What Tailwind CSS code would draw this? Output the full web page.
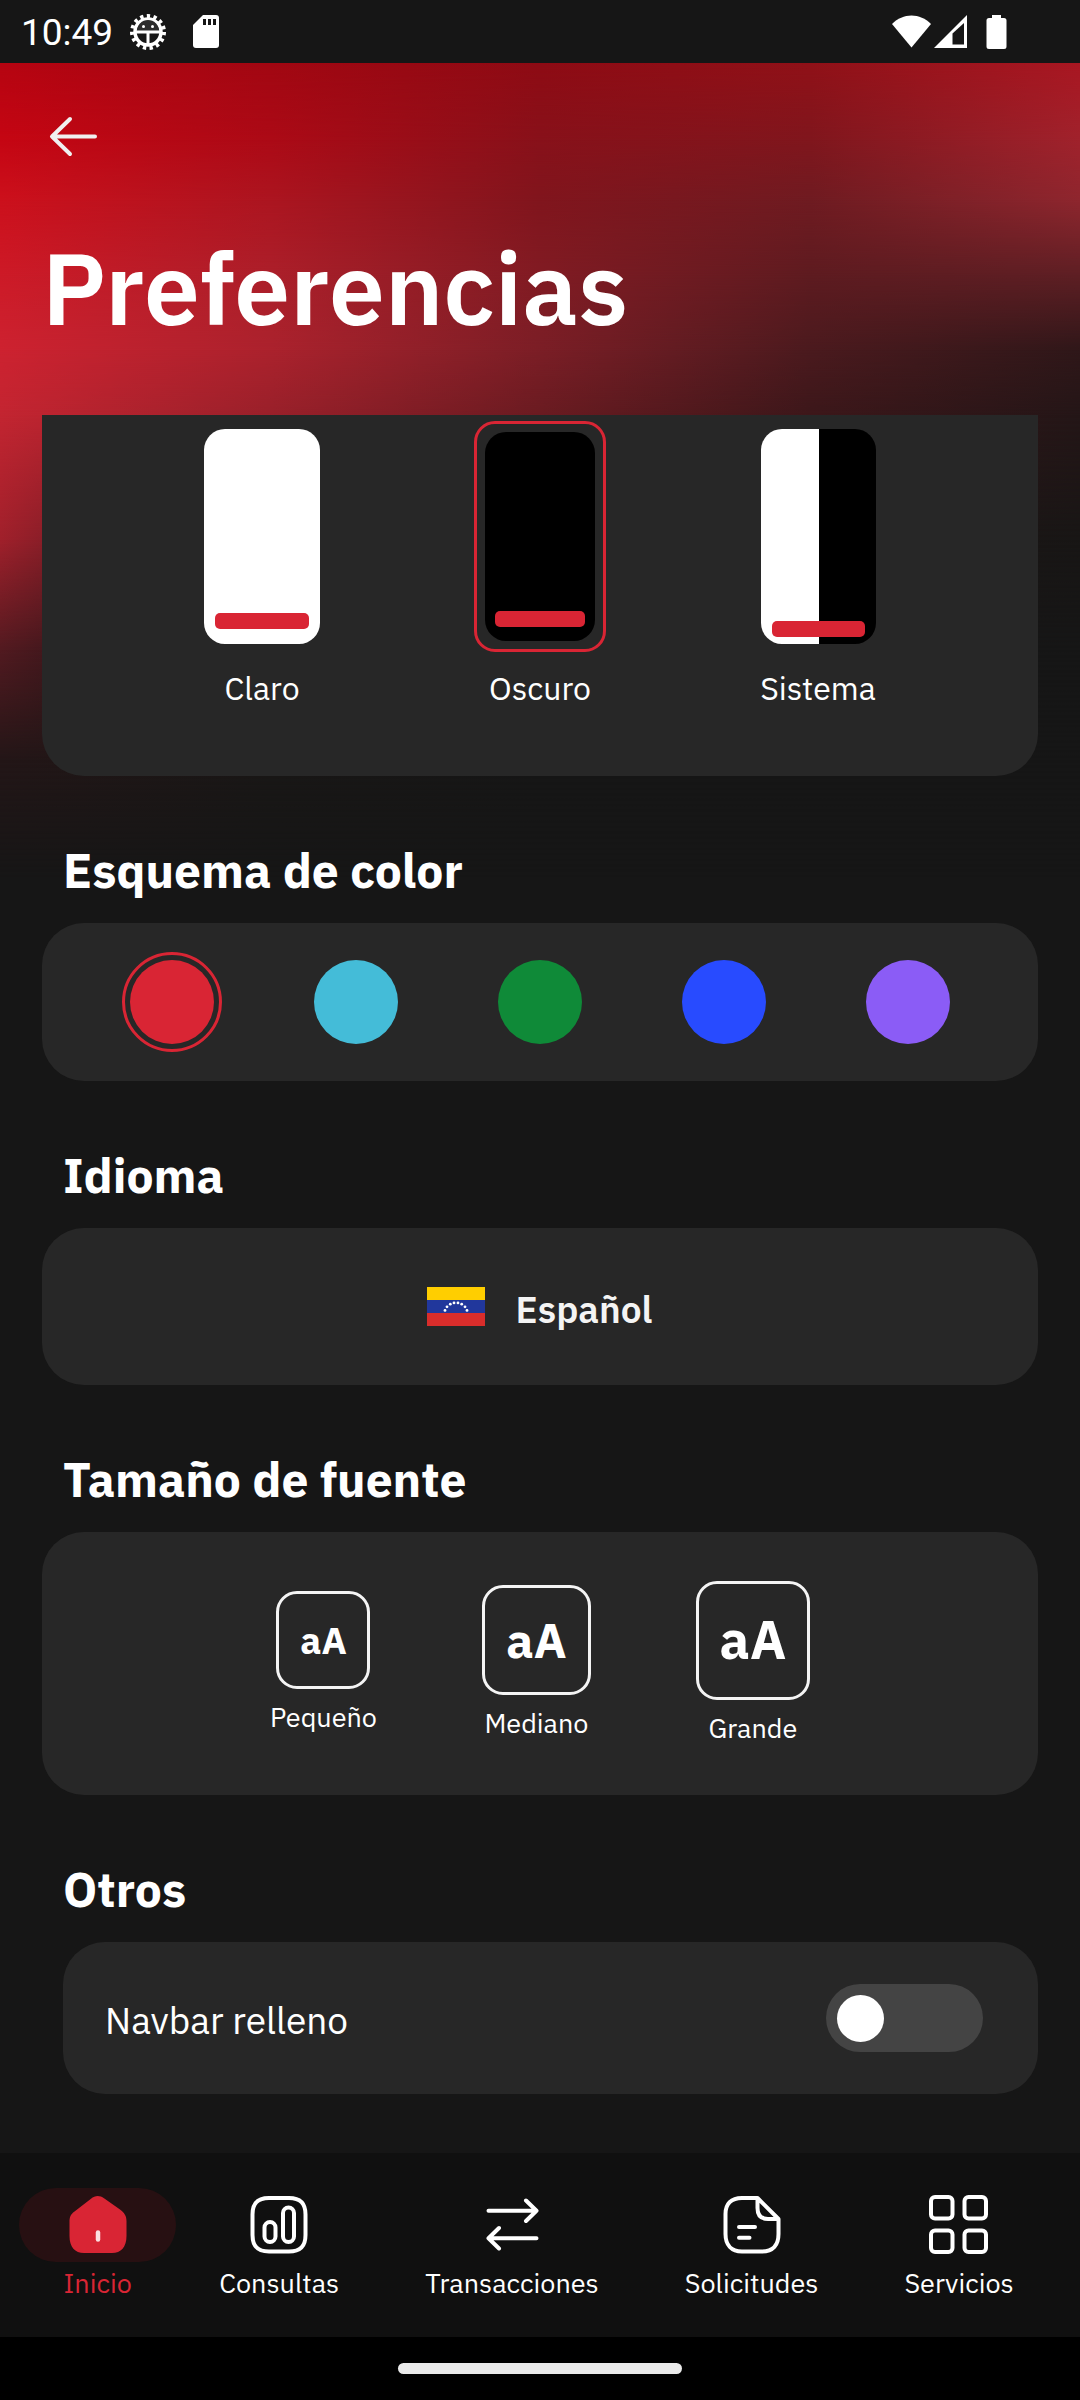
<!DOCTYPE html>
<html lang="es">
<head>
<meta charset="utf-8">
<meta name="viewport" content="width=device-width, initial-scale=1">
<title>Preferencias</title>
<script src="https://cdn.jsdelivr.net/npm/@tailwindcss/browser@4"></script>
</head>
<body class="bg-[#161616] text-white font-['IBM_Plex_Sans',Roboto,sans-serif]">
<div class="relative isolate flex min-h-screen flex-col">

  <!-- Backdrop: each row is a horizontal gradient that fades in over the row above -->
  <svg class="absolute inset-x-0 top-0 -z-10 h-[880px] w-full" viewBox="0 0 1080 880" preserveAspectRatio="none" aria-hidden="true">
    <defs>
      <linearGradient id="r1"><stop offset="0" stop-color="#b60411"/><stop offset=".25" stop-color="#a20712"/><stop offset=".5" stop-color="#8e0b14"/><stop offset=".75" stop-color="#901118"/><stop offset="1" stop-color="#a91722"/></linearGradient>
      <linearGradient id="r2"><stop offset="0" stop-color="#c50613"/><stop offset=".25" stop-color="#ac0a16"/><stop offset=".5" stop-color="#88111a"/><stop offset=".75" stop-color="#80161d"/><stop offset="1" stop-color="#a0222c"/></linearGradient>
      <linearGradient id="r3"><stop offset="0" stop-color="#cc101c"/><stop offset=".25" stop-color="#ac1520"/><stop offset=".5" stop-color="#81151d"/><stop offset=".75" stop-color="#6f1b21"/><stop offset="1" stop-color="#8e262e"/></linearGradient>
      <linearGradient id="r4"><stop offset="0" stop-color="#cd1a27"/><stop offset=".25" stop-color="#ac1f2a"/><stop offset=".5" stop-color="#811b23"/><stop offset=".75" stop-color="#5e1b20"/><stop offset="1" stop-color="#5e1f24"/></linearGradient>
      <linearGradient id="r5"><stop offset="0" stop-color="#cd2230"/><stop offset=".25" stop-color="#ab222d"/><stop offset=".5" stop-color="#7b1e26"/><stop offset=".75" stop-color="#4b1a1e"/><stop offset="1" stop-color="#2f1719"/></linearGradient>
      <linearGradient id="r6"><stop offset="0" stop-color="#c32531"/><stop offset=".25" stop-color="#99202a"/><stop offset=".5" stop-color="#6a1b21"/><stop offset=".75" stop-color="#3c171a"/><stop offset="1" stop-color="#241617"/></linearGradient>
      <linearGradient id="r7"><stop offset="0" stop-color="#a0202b"/><stop offset=".04" stop-color="#8a1e28"/><stop offset=".5" stop-color="#28171a"/><stop offset="1" stop-color="#181615"/></linearGradient>
      <linearGradient id="r8"><stop offset="0" stop-color="#521a20"/><stop offset=".04" stop-color="#44181d"/><stop offset=".5" stop-color="#181616"/><stop offset="1" stop-color="#161616"/></linearGradient>
      <linearGradient id="r9"><stop offset="0" stop-color="#231617"/><stop offset=".25" stop-color="#191716"/><stop offset=".5" stop-color="#161616"/><stop offset="1" stop-color="#161616"/></linearGradient>
      <linearGradient id="fade" x2="0" y2="1"><stop offset="0" stop-color="#fff" stop-opacity="0"/><stop offset="1" stop-color="#fff"/></linearGradient>
      <mask id="m2" maskUnits="userSpaceOnUse" x="0" y="0" width="1080" height="880"><rect y="63" width="1080" height="77" fill="url(#fade)"/><rect y="140" width="1080" height="740" fill="#fff"/></mask>
      <mask id="m3" maskUnits="userSpaceOnUse" x="0" y="0" width="1080" height="880"><rect y="140" width="1080" height="60" fill="url(#fade)"/><rect y="200" width="1080" height="680" fill="#fff"/></mask>
      <mask id="m4" maskUnits="userSpaceOnUse" x="0" y="0" width="1080" height="880"><rect y="200" width="1080" height="75" fill="url(#fade)"/><rect y="275" width="1080" height="605" fill="#fff"/></mask>
      <mask id="m5" maskUnits="userSpaceOnUse" x="0" y="0" width="1080" height="880"><rect y="275" width="1080" height="75" fill="url(#fade)"/><rect y="350" width="1080" height="530" fill="#fff"/></mask>
      <mask id="m6" maskUnits="userSpaceOnUse" x="0" y="0" width="1080" height="880"><rect y="350" width="1080" height="65" fill="url(#fade)"/><rect y="415" width="1080" height="465" fill="#fff"/></mask>
      <mask id="m7" maskUnits="userSpaceOnUse" x="0" y="0" width="1080" height="880"><rect y="415" width="1080" height="125" fill="url(#fade)"/><rect y="540" width="1080" height="340" fill="#fff"/></mask>
      <mask id="m8" maskUnits="userSpaceOnUse" x="0" y="0" width="1080" height="880"><rect y="540" width="1080" height="110" fill="url(#fade)"/><rect y="650" width="1080" height="230" fill="#fff"/></mask>
      <mask id="m9" maskUnits="userSpaceOnUse" x="0" y="0" width="1080" height="880"><rect y="650" width="1080" height="110" fill="url(#fade)"/><rect y="760" width="1080" height="120" fill="#fff"/></mask>
      <mask id="m10" maskUnits="userSpaceOnUse" x="0" y="0" width="1080" height="880"><rect y="760" width="1080" height="120" fill="url(#fade)"/></mask>
    </defs>
    <rect width="1080" height="880" fill="url(#r1)"/>
    <rect width="1080" height="880" fill="url(#r2)" mask="url(#m2)"/>
    <rect width="1080" height="880" fill="url(#r3)" mask="url(#m3)"/>
    <rect width="1080" height="880" fill="url(#r4)" mask="url(#m4)"/>
    <rect width="1080" height="880" fill="url(#r5)" mask="url(#m5)"/>
    <rect width="1080" height="880" fill="url(#r6)" mask="url(#m6)"/>
    <rect width="1080" height="880" fill="url(#r7)" mask="url(#m7)"/>
    <rect width="1080" height="880" fill="url(#r8)" mask="url(#m8)"/>
    <rect width="1080" height="880" fill="url(#r9)" mask="url(#m9)"/>
    <rect width="1080" height="880" fill="#161616" mask="url(#m10)"/>
  </svg>

  <!-- Status bar -->
  <div class="flex h-[63px] items-center bg-[#161616] pl-[21px] pr-[73px] font-[Roboto,sans-serif]">
    <span class="pt-0.5 text-[37px] leading-[44px]">10:49</span>
    <svg class="ml-[15px] size-10" viewBox="0 0 40 40" aria-hidden="true">
      <circle cx="20" cy="20" r="16" fill="none" stroke="#fff" stroke-width="4" stroke-dasharray="3.300 3.402"/>
      <circle cx="20" cy="20" r="13" fill="none" stroke="#fff" stroke-width="3.500"/>
      <path d="M9 19a11 11 0 0 1 22 0z" fill="#2c2c2c"/>
      <path d="M8 20h24M20 20v13" stroke="#fff" stroke-width="3"/>
      <circle cx="15.500" cy="14.500" r="1.500" fill="#fff"/><circle cx="24.500" cy="14.500" r="1.500" fill="#fff"/>
    </svg>
    <svg class="ml-[25px] h-[34px] w-[26px]" viewBox="0 0 26 34" aria-hidden="true">
      <path d="M10 0h13a3 3 0 0 1 3 3v27a3 3 0 0 1-3 3H3a3 3 0 0 1-3-3V10z" fill="#fff"/>
      <path d="M10 4h3v6h-3zM15 4h3v6h-3zM20 4h3v6h-3z" fill="#161616"/>
    </svg>
    <svg class="ml-auto h-[34px] w-[116px]" viewBox="0 0 116 34" aria-hidden="true">
      <path d="M1 9C12-2.500 29-2.500 40 9L20.500 32.500z" fill="#fff"/>
      <path d="M43 33L76 0v33z" fill="#fff"/><path d="M61.500 18.500L73 8v21.500H61.500z" fill="#161616"/>
      <path d="M101 0h9v3h3a2.500 2.500 0 0 1 2.500 2.500v26a2.500 2.500 0 0 1-2.500 2.500H98a2.500 2.500 0 0 1-2.500-2.500v-26A2.500 2.500 0 0 1 98 3h3z" fill="#fff"/>
    </svg>
  </div>

  <header class="px-[42px] pt-[42px] pb-[62px]">
    <button type="button" aria-label="Volver" class="flex size-16 items-center justify-center">
      <svg class="size-16" viewBox="0 0 64 64" fill="none" stroke="#f0f0f0" stroke-width="4" stroke-linecap="round" stroke-linejoin="round" aria-hidden="true"><path d="M28 14L10 31.500 28 49M11 31.500H53"/></svg>
    </button>
    <h1 class="mt-[54px] text-[100px] leading-[130px] font-semibold">Preferencias</h1>
  </header>

  <main class="flex-1 px-[42px] pb-[59px]">
    <fieldset class="grid grid-cols-3 rounded-b-[42px] bg-[#272727] px-[81px] pt-[6px] pb-[67px]">
      <legend class="sr-only">Tema</legend>
      <label class="flex flex-col items-center">
        <input type="radio" name="tema" class="sr-only">
        <span class="flex h-[231px] items-center">
          <span class="flex h-[215px] w-[116px] flex-col justify-end rounded-[21px] bg-white px-[11px] pb-[15px]"><span class="h-4 rounded-[5px] bg-[#d92534]"></span></span>
        </span>
        <span class="mt-[15px] text-[32px] leading-[42px]">Claro</span>
      </label>
      <label class="flex flex-col items-center">
        <input type="radio" name="tema" class="sr-only" checked>
        <span class="flex h-[231px] w-[132px] rounded-[21px] border-[3px] border-[#d92534] p-2">
          <span class="flex w-full flex-col justify-end rounded-[21px] bg-black px-[10px] pb-[14px]"><span class="h-4 rounded-[5px] bg-[#d92534]"></span></span>
        </span>
        <span class="mt-[15px] text-[32px] leading-[42px]">Oscuro</span>
      </label>
      <label class="flex flex-col items-center">
        <input type="radio" name="tema" class="sr-only">
        <span class="flex h-[231px] items-center">
          <span class="flex h-[215px] w-[115px] flex-col justify-end rounded-[21px] bg-linear-to-r from-white from-50% to-black to-50% px-[11px] pb-[7px]"><span class="h-4 rounded-[5px] bg-[#d92534]"></span></span>
        </span>
        <span class="mt-[15px] text-[32px] leading-[42px]">Sistema</span>
      </label>
    </fieldset>

    <h2 class="px-[21px] pt-[62px] pb-[21px] text-[48px] leading-[64px] font-bold">Esquema de color</h2>
    <div role="radiogroup" aria-label="Esquema de color" class="grid h-[158px] grid-cols-5 items-center justify-items-center rounded-[42px] bg-[#272727] px-[38px]">
      <input type="radio" name="color" aria-label="Rojo" checked class="size-[84px] appearance-none rounded-full bg-[#d92534] outline-[3px] outline-offset-[5px] outline-[#d92534]">
      <input type="radio" name="color" aria-label="Celeste" class="size-[84px] appearance-none rounded-full bg-[#44bcd8]">
      <input type="radio" name="color" aria-label="Verde" class="size-[84px] appearance-none rounded-full bg-[#0f8a38]">
      <input type="radio" name="color" aria-label="Azul" class="size-[84px] appearance-none rounded-full bg-[#284bff]">
      <input type="radio" name="color" aria-label="Morado" class="size-[84px] appearance-none rounded-full bg-[#8b5cf6]">
    </div>

    <h2 class="px-[21px] pt-[62px] pb-[21px] text-[48px] leading-[64px] font-bold">Idioma</h2>
    <button type="button" class="flex h-[157px] w-full items-center justify-center gap-[30px] rounded-[42px] bg-[#272727] text-[#f4f4f4]">
      <svg class="h-[39px] w-[58px]" viewBox="0 0 58 40" preserveAspectRatio="none" aria-hidden="true">
        <path d="M0 0h58v14H0z" fill="#ffce00"/><path d="M0 13.300h58v14H0z" fill="#21379c"/><path d="M0 26.600h58V40H0z" fill="#d92d2b"/>
        <g fill="#fff"><circle cx="18" cy="24" r="1.400"/><circle cx="20" cy="20.300" r="1.400"/><circle cx="23.300" cy="17.600" r="1.400"/><circle cx="27" cy="16.300" r="1.400"/><circle cx="31" cy="16.300" r="1.400"/><circle cx="34.700" cy="17.600" r="1.400"/><circle cx="38" cy="20.300" r="1.400"/><circle cx="40" cy="24" r="1.400"/></g>
      </svg>
      <span class="pt-1 text-[37px] leading-[48px] font-semibold">Español</span>
    </button>

    <h2 class="px-[21px] pt-[62px] pb-[21px] text-[48px] leading-[64px] font-bold">Tamaño de fuente</h2>
    <div class="flex h-[263px] items-center justify-center gap-[105px] rounded-[42px] bg-[#272727] pb-0.5">
      <button type="button" class="flex flex-col items-center">
        <span class="flex h-[98px] w-[94px] items-center justify-center rounded-[21px] border-[3px] border-[#f4f4f4] text-[37px] leading-[48px] font-bold">aA</span>
        <span class="mt-[10px] text-[27px] leading-[35px]">Pequeño</span>
      </button>
      <button type="button" class="flex flex-col items-center">
        <span class="flex h-[110px] w-[109px] items-center justify-center rounded-[21px] border-[3px] border-[#f4f4f4] text-[48px] leading-[64px] font-bold">aA</span>
        <span class="mt-[10px] text-[27px] leading-[35px]">Mediano</span>
      </button>
      <button type="button" class="flex flex-col items-center">
        <span class="flex h-[119px] w-[114px] items-center justify-center rounded-[21px] border-[3px] border-[#f4f4f4] text-[53px] leading-[70px] font-bold">aA</span>
        <span class="mt-[10px] text-[27px] leading-[35px]">Grande</span>
      </button>
    </div>

    <h2 class="px-[21px] pt-[62px] pb-[21px] text-[48px] leading-[64px] font-bold">Otros</h2>
    <div class="ml-[21px] flex h-[152px] items-center justify-between rounded-[42px] bg-[#272727] pr-[55px] pl-[42px]">
      <label for="navbar" class="pt-1 text-[37px] leading-[48px]">Navbar relleno</label>
      <input id="navbar" type="checkbox" role="switch" class="flex h-[68px] w-[157px] appearance-none items-center rounded-full bg-[#444] px-[11px] before:size-[47px] before:rounded-full before:bg-white before:content-[''] checked:justify-end checked:bg-[#d92534]">
    </div>
  </main>

  <nav class="flex h-[184px] justify-center bg-[#101010] pt-[35px] pr-1 text-[27px] leading-[35px]">
    <a href="#inicio" aria-current="page" class="flex flex-col items-center text-[#d92534]">
      <span class="flex h-[74px] w-[157px] items-center justify-center rounded-full bg-[#271012]">
        <svg class="size-16" viewBox="0 0 64 64" aria-hidden="true"><path d="M25 5.700C29 2.300 34 2.300 38 5.300L54 16.500C58.500 20 60.500 23 60.500 28V43C60.500 54 55 60 46 60H18C9 60 3.500 54 3.500 43V29C3.500 24 4.500 21.500 8.500 18.500z" fill="#d92534"/><path d="M32 39.500v7" stroke="#fbe0e2" stroke-width="4.500" stroke-linecap="round"/></svg>
      </span>
      <span class="mt-[3px]">Inicio</span>
    </a>
    <a href="#consultas" class="flex flex-col items-center px-[43px]">
      <svg class="my-[5px] size-16" viewBox="0 0 64 64" fill="none" stroke="#fff" stroke-width="4" aria-hidden="true"><path d="M22 5H42C53.500 5 58.500 10.500 58.500 21.500V42C58.500 53 53.500 58.500 42 58.500H22C10.500 58.500 5.500 53 5.500 42V21.500C5.500 10.500 10.500 5 22 5z"/><rect x="17.500" y="29" width="11" height="20" rx="5.500"/><rect x="36" y="14.500" width="11" height="34.500" rx="5.500"/></svg>
      <span class="mt-[3px]">Consultas</span>
    </a>
    <a href="#transacciones" class="flex flex-col items-center px-[43px]">
      <svg class="my-[5px] size-16" viewBox="0 0 64 64" fill="none" stroke="#fff" stroke-width="4" stroke-linecap="round" stroke-linejoin="round" aria-hidden="true"><path d="M8.500 17.700H56.500M46 7.500L56.500 17.700 46 28M56.500 45.300H8.500M19 35L8.500 45.300 19 55.500"/></svg>
      <span class="mt-[3px]">Transacciones</span>
    </a>
    <a href="#solicitudes" class="flex flex-col items-center px-[43px]">
      <svg class="my-[5px] size-16" viewBox="0 0 64 64" fill="none" stroke="#fff" stroke-width="4" stroke-linecap="round" stroke-linejoin="round" aria-hidden="true"><path d="M37.500 5H22C11 5 5.500 11 5.500 21V41C5.500 52 11.500 58.500 22 58.500H42C53 58.500 58.500 52 58.500 41V26L37.500 5V15C37.500 22.500 41 26 48 26H58.500M19 34H35M19 44.700H29.500"/></svg>
      <span class="mt-[3px]">Solicitudes</span>
    </a>
    <a href="#servicios" class="flex flex-col items-center px-[43px]">
      <svg class="my-[5px] size-16" viewBox="0 0 64 64" fill="none" stroke="#fff" stroke-width="4" aria-hidden="true"><rect x="4" y="4" width="21.500" height="21.500" rx="4"/><rect x="37.500" y="4" width="21.500" height="21.500" rx="4"/><rect x="4" y="37.500" width="21.500" height="21.500" rx="4"/><rect x="37.500" y="37.500" width="21.500" height="21.500" rx="4"/></svg>
      <span class="mt-[3px]">Servicios</span>
    </a>
  </nav>

  <div class="flex h-[63px] items-center justify-center bg-black"><span class="h-[11px] w-[284px] rounded-full bg-[#eaeaea]"></span></div>
</div>
</body>
</html>
